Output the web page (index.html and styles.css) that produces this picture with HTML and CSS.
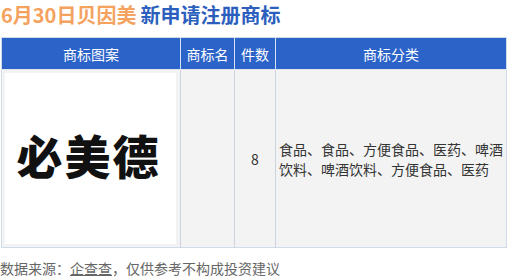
FILE: index.html
```html
<!DOCTYPE html>
<html lang="zh">
<head>
<meta charset="utf-8">
<link rel="stylesheet" href="styles.css">
</head>
<body>
<div class="page">
  <h1 class="title"><span class="t-orange">6月30日贝因美</span><span class="t-blue">新申请注册商标</span></h1>
  <table class="tm">
    <thead>
      <tr>
        <th class="c1">商标图案</th>
        <th class="c2">商标名</th>
        <th class="c3">件数</th>
        <th class="c4">商标分类</th>
      </tr>
    </thead>
    <tbody>
      <tr>
        <td class="c1"><div class="logo">必美德</div></td>
        <td class="c2"></td>
        <td class="c3 num">8</td>
        <td class="c4 cat">食品、食品、方便食品、医药、啤酒饮料、啤酒饮料、方便食品、医药</td>
      </tr>
    </tbody>
  </table>
  <p class="src">数据来源：<span class="u">企查查</span>，仅供参考不构成投资建议</p>
</div>
</body>
</html>
```
FILE: styles.css
```css
html, body {
  margin: 0;
  padding: 0;
  background: #ffffff;
}
.page {
  width: 508px;
  font-family: "Noto Sans CJK SC", "Microsoft YaHei", sans-serif;
}
.title {
  margin: 0;
  padding: 1px 0 0 1px;
  height: 37px;
  box-sizing: border-box;
  font-size: 20px;
  line-height: 27px;
  font-weight: 700;
  white-space: nowrap;
}
.t-orange {
  color: #f4a25e;
  margin-right: 4px;
}
.t-blue {
  color: #2c5fbd;
}
.tm {
  margin-left: 1px;
  width: 506px;
  border-collapse: collapse;
  border: 1px solid #cddbea;
  table-layout: fixed;
}
.tm th {
  background: #2c63c9;
  color: #ffffff;
  font-size: 14px;
  font-weight: 400;
  height: 31px;
  padding: 0;
  text-align: center;
  border-left: 1px solid #d6e2f2;
  border-bottom: 1px solid #dfe6ee;
}
.tm th:first-child { border-left: none; }
.tm td {
  background: #f3f3f3;
  border-left: 1px solid #ccd4de;
  padding: 0;
  vertical-align: middle;
  font-size: 14px;
  color: #333333;
}
.tm td:first-child { border-left: none; }
.c1 { width: 178px; }
.c2 { width: 53px; }
.c3 { width: 40px; }
.c4 { width: auto; }
.tm td.c1 {
  padding: 3px 4px 3px 3px;
}
.logo {
  width: 171px;
  height: 171px;
  background: #ffffff;
  display: flex;
  align-items: center;
  justify-content: center;
  font-size: 46px;
  font-weight: 900;
  color: #111111;
  letter-spacing: 2px;
  padding: 0 4px 10px 0;
  box-sizing: border-box;
}
.num {
  text-align: center;
}
.tm td.cat {
  padding: 0 2px 0 3px;
  line-height: 20px;
}
.src {
  margin: 10px 0 0 0;
  font-size: 14px;
  line-height: 20px;
  color: #666666;
}
.u {
  text-decoration: underline;
}
```
